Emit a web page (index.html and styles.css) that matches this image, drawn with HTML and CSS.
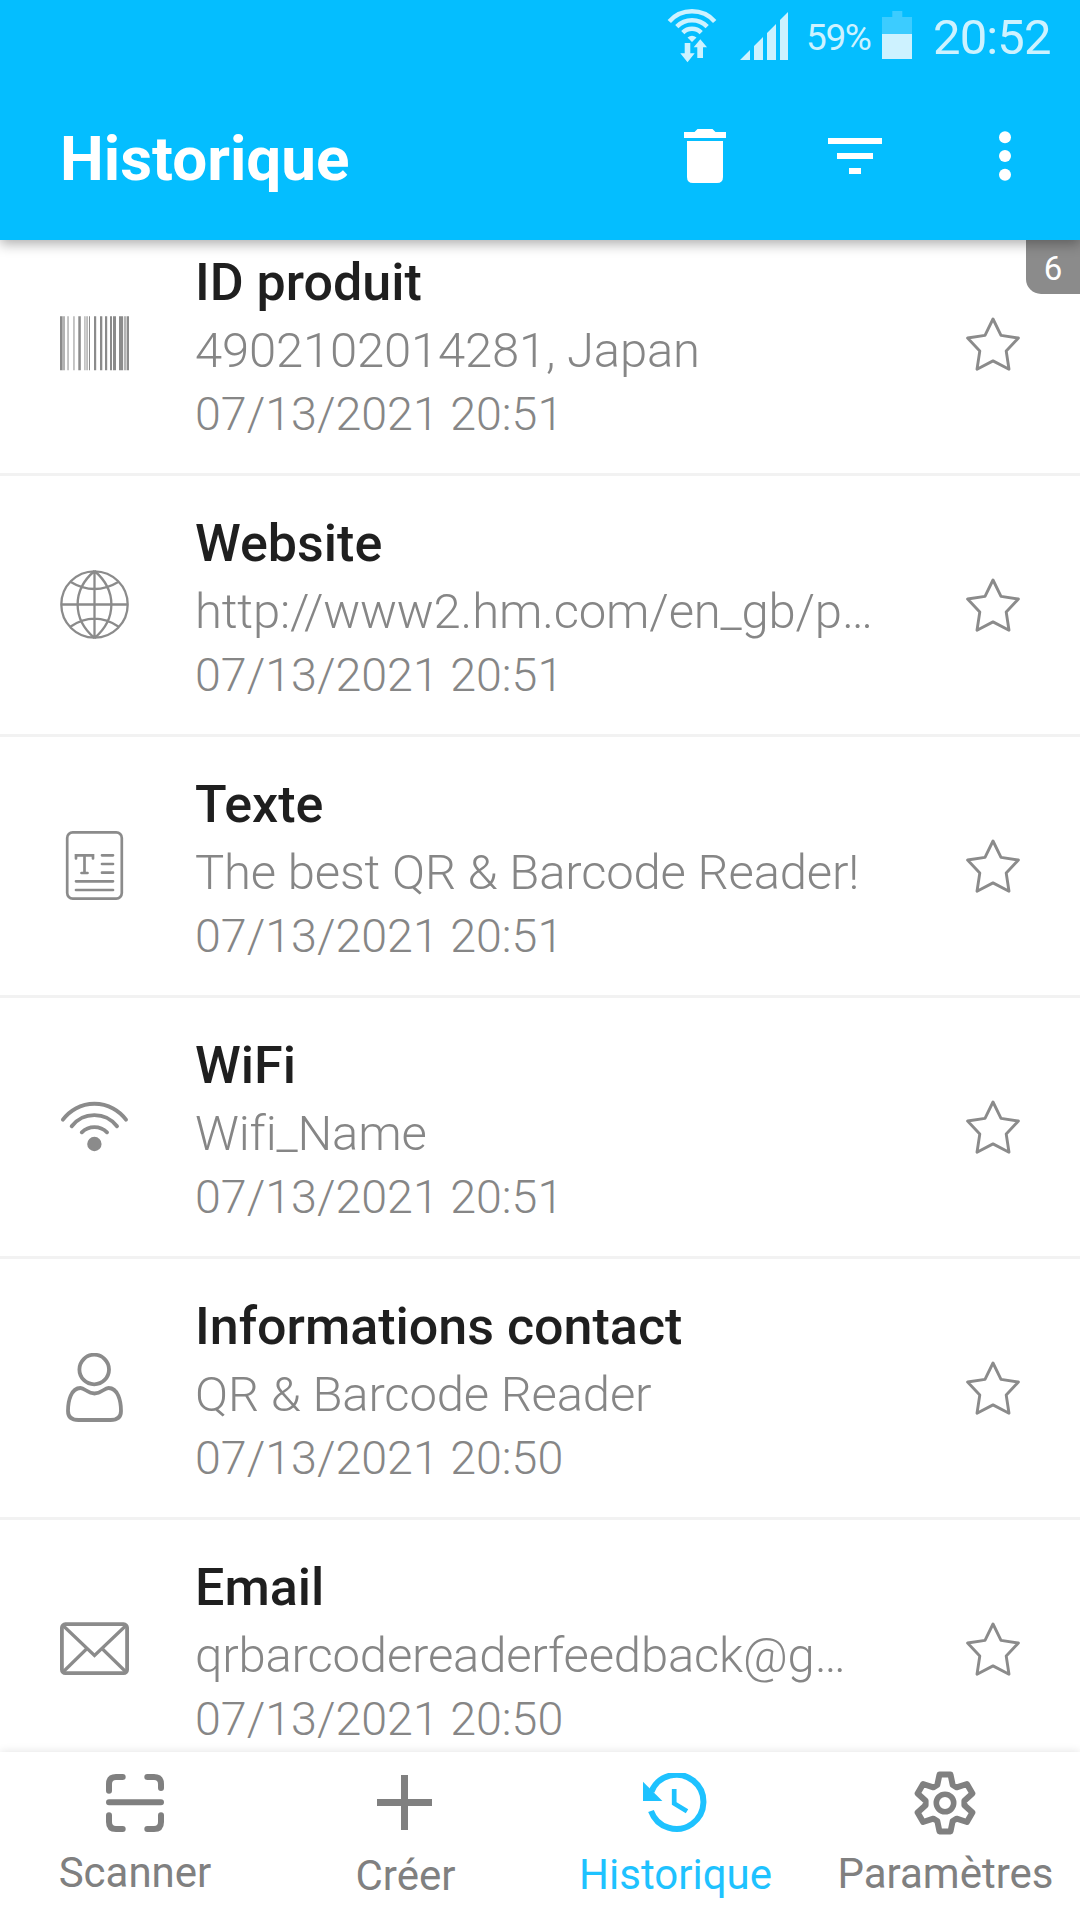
FILE: index.html
```html
<!DOCTYPE html>
<html lang="fr">
<head>
<meta charset="utf-8">
<title>Historique</title>
<link rel="stylesheet" href="styles.css">
</head>
<body>
<svg class="defs" aria-hidden="true">
  <symbol id="star" viewBox="0 0 54 54">
    <path d="M27 2 35 18.4 52.4 21 40.2 34 43 52.2 27 43.9 11 52.2 13.8 34 1.6 21 19 18.4Z" fill="none" stroke="currentColor" stroke-width="2.9" stroke-linejoin="round"/>
  </symbol>
</svg>
<div class="app">
  <header class="header">
    <div class="status">
      <svg class="wifi-status" width="50" height="56" viewBox="0 0 50 56" fill="none" stroke="currentColor" stroke-width="4.5">
        <path d="M2.3 13.4A30.5 30.5 0 0 1 47.7 13.4M9.8 18.6A21.5 21.5 0 0 1 40.2 18.6M15.8 24.6A13 13 0 0 1 34.2 24.6"/>
        <path d="M20.5 29.5Q25 26 29.5 29.5L25 34ZM17.7 35h5.6v10.3h4.4L20.5 54.3 13.3 45.3h4.4ZM33.3 31.3 40 39.3h-4V50h-5.7V39.3h-3.6Z" fill="currentColor" stroke="none"/>
      </svg>
      <svg class="signal" width="48" height="48" viewBox="0 0 48 48" fill="currentColor"><path d="M0 48 10 38V48ZM14 34 23 25V48H14ZM27 21 36 12V48H27ZM40 8 48 0V48H40Z"/></svg>
      <span class="percent">59%</span>
      <svg class="battery" width="30" height="48" viewBox="0 0 30 48"><path d="M10.3 0h10v6H30v17H0V6h10.3Z" fill="#3cccff"/><path d="M0 23h30v25H0Z" fill="currentColor"/></svg>
      <span class="clock">20:52</span>
    </div>
    <div class="toolbar">
      <h1 class="title">Historique</h1>
      <svg class="trash" width="42" height="54" viewBox="0 0 42 54" fill="currentColor"><path d="M0 3H10.5L13.5 0H28.5L31.5 3H42V9H0ZM3 12H39V48Q39 54 33 54H9Q3 54 3 48Z"/></svg>
      <svg class="filter" width="54" height="36" viewBox="0 0 54 36" fill="currentColor"><path d="M0 0H54V6H0ZM9 15H45V21H9ZM21 30H33V36H21Z"/></svg>
      <svg class="more" width="12" height="50" viewBox="0 0 12 50" fill="currentColor"><circle cx="6" cy="6.2" r="6"/><circle cx="6" cy="25" r="6"/><circle cx="6" cy="43.8" r="6"/></svg>
    </div>
  </header>

  <main class="list">
    <span class="count">6</span>
    <article class="row">
      <svg class="icon" viewBox="0 0 69 69" fill="currentColor">
        <path d="M0 7.3h2.4v54H0ZM18.3 7.3h2.5v54h-2.5ZM29 7.3h1v54h-1ZM34 7.3h2.2v54H34ZM40 7.3h2.3v54H40ZM45 7.3h2.2v54H45ZM50 7.3h2v54h-2ZM53 7.3h3v54h-3ZM59 7.3H63v54h-4ZM66.8 7.3H69v54h-2.2Z"/>
        <path d="M2.4 7.3h2.6v54h-2.6ZM7.3 7.3h1.5v54H7.3ZM13.2 7.3h1.5v54h-1.5ZM24.2 7.3h1.4v54h-1.4ZM26.3 7.3h1.6v54h-1.6ZM63.8 7.3h2.6v54h-2.6Z" opacity=".65"/>
      </svg>
      <div class="text"><h2>ID produit</h2><p class="value">4902102014281, Japan</p><p class="date">07/13/2021 20:51</p></div>
      <svg class="star"><use href="#star"/></svg>
    </article>
    <article class="row">
      <svg class="icon" viewBox="0 0 69 69" fill="none" stroke="currentColor" stroke-width="2.3">
        <circle cx="34.5" cy="34.5" r="33.2"/>
        <path d="M34.5 1V68M1 34.5H68M34.5 1C12 20 12 49 34.5 68M34.5 1C57 20 57 49 34.5 68M10.3 11.7Q34.5 26.3 58.7 11.7M10.3 56.7Q34.5 40.7 58.7 56.7"/>
      </svg>
      <div class="text"><h2>Website</h2><p class="value">http://www2.hm.com/en_gb/p…</p><p class="date">07/13/2021 20:51</p></div>
      <svg class="star"><use href="#star"/></svg>
    </article>
    <article class="row">
      <svg class="icon" viewBox="0 0 69 69" fill="none" stroke="currentColor" stroke-width="2.7" stroke-linecap="round">
        <rect x="7.2" y="1.4" width="54.6" height="66.2" rx="5.5"/>
        <path d="M16 27.5V24.3H33V27.5M24.5 24.3V42M21.5 42H27.5M42 24.3H53M42 33H53M42 41.7H53M16 50.3H53M16 59H53"/>
      </svg>
      <div class="text"><h2>Texte</h2><p class="value">The best QR &amp; Barcode Reader!</p><p class="date">07/13/2021 20:51</p></div>
      <svg class="star"><use href="#star"/></svg>
    </article>
    <article class="row">
      <svg class="icon" viewBox="0 0 69 69" fill="none" stroke="currentColor" stroke-width="3.9" stroke-linecap="round">
        <path d="M2.9 27.7A39.2 39.2 0 0 1 66 27.7M11.7 34.3A28.5 28.5 0 0 1 57 34.3M21.8 40.3A18 18 0 0 1 47 40.3"/>
        <circle cx="34.4" cy="52" r="7.2" fill="currentColor" stroke="none"/>
      </svg>
      <div class="text"><h2>WiFi</h2><p class="value">Wifi_Name</p><p class="date">07/13/2021 20:51</p></div>
      <svg class="star"><use href="#star"/></svg>
    </article>
    <article class="row">
      <svg class="icon" viewBox="0 0 69 69" fill="none" stroke="currentColor" stroke-width="3.8">
        <circle cx="34.2" cy="16.5" r="14.8"/>
        <path d="M34.5 40.5C28 40.5 24.5 35 20.5 35C11 35 8 48 8 58C8 64 12 67 18.5 67H50.5C57 67 61 64 61 58C61 48 58 35 48.5 35C44.5 35 41 40.5 34.5 40.5Z"/>
      </svg>
      <div class="text"><h2>Informations contact</h2><p class="value">QR &amp; Barcode Reader</p><p class="date">07/13/2021 20:50</p></div>
      <svg class="star"><use href="#star"/></svg>
    </article>
    <article class="row">
      <svg class="icon" viewBox="0 0 69 69" fill="none" stroke="currentColor" stroke-width="3.8">
        <rect x="1.9" y="10.2" width="65.2" height="49" rx="3.5"/>
        <path d="M3 11.5 34.5 41.5 66 11.5M26.5 35 3 58M42.5 35 66 58" stroke-width="3.2"/>
      </svg>
      <div class="text"><h2>Email</h2><p class="value">qrbarcodereaderfeedback@g…</p><p class="date">07/13/2021 20:50</p></div>
      <svg class="star"><use href="#star"/></svg>
    </article>
  </main>

  <nav class="nav">
    <a class="tab tab-scan">
      <svg width="58" height="58" viewBox="0 0 58 58" fill="none" stroke="currentColor" stroke-width="6" stroke-linecap="round"><path d="M3 16.7V10Q3 3 10 3H16.7M41.3 3H48Q55 3 55 10V14M3 41.3V48Q3 55 10 55H16.7M41.3 55H48Q55 55 55 48V41.3M3 28.3H55"/></svg>
      <span>Scanner</span>
    </a>
    <a class="tab tab-create">
      <svg width="55" height="55" viewBox="0 0 55 55" fill="none" stroke="currentColor" stroke-width="7"><path d="M27.5 0V55M0 27.5H55"/></svg>
      <span>Créer</span>
    </a>
    <a class="tab tab-history active">
      <svg width="64" height="60" viewBox="0 0 64 60" fill="none" stroke="currentColor" stroke-width="6"><path d="M8.5 18.5A27 27 0 1 1 8 37.9"/><path d="M31.2 16V30.5L44 38.2" stroke-width="4.7"/><path d="M0 8.7V27.9H19.4Z" fill="currentColor" stroke="none"/></svg>
      <span>Historique</span>
    </a>
    <a class="tab tab-settings">
      <svg width="64" height="64" viewBox="-32 -32 64 64" fill="none" stroke="currentColor" stroke-width="6" stroke-linejoin="round"><path d="M-5.5 -28.5H5.5L7.7 -18 11.7 -15.7 21.9 -19 27.4 -9.5 19.4 -2.3V2.3L27.4 9.5 21.9 19 11.7 15.7 7.7 18 5.5 28.5H-5.5L-7.7 18 -11.7 15.7 -21.9 19 -27.4 9.5 -19.4 2.3V-2.3L-27.4 -9.5 -21.9 -19 -11.7 -15.7 -7.7 -18Z"/><circle r="8.7" stroke-width="5.6"/></svg>
      <span>Paramètres</span>
    </a>
  </nav>
</div>
</body>
</html>
```
FILE: styles.css
```css
* { box-sizing: border-box; margin: 0; padding: 0; }
body { font-family: Roboto, "Liberation Sans", sans-serif; background: #fff; }
svg { display: block; flex: none; }
.defs { position: absolute; width: 0; height: 0; }
.app { width: 1080px; height: 1920px; display: flex; flex-direction: column; overflow: hidden; }

.header { position: relative; z-index: 2; height: 240px; flex: none; background: #04beff; color: #fff; box-shadow: 0 4px 12px rgba(0, 0, 0, .32); }
.status { height: 72px; display: flex; align-items: flex-start; justify-content: flex-end; padding-right: 29px; color: #cdf2ff; white-space: nowrap; }
.wifi-status { margin: 8px 23px 0 0; }
.signal { margin: 12px 18px 0 0; }
.percent { width: 67px; margin: 17px 9px 0 0; font-size: 37px; line-height: 42px; letter-spacing: -1.4px; }
.battery { margin: 11px 21px 0 0; }
.clock { width: 118px; margin-top: 9px; font-size: 49px; line-height: 58px; letter-spacing: -.9px; }

.toolbar { height: 168px; display: flex; align-items: center; padding: 0 69px 0 60px; }
.title { flex: 1; font-size: 62px; line-height: 70px; font-weight: 700; padding-top: 6px; }
.trash { margin-right: 102px; }
.filter { margin-right: 117px; }

.list { position: relative; flex: 1; min-height: 0; overflow: hidden; color: #8b8b8b; }
.count { position: absolute; top: 0; right: 0; width: 54px; height: 54px; border-bottom-left-radius: 15px; background: #8b8b8b; color: #fff; font-size: 33px; line-height: 57px; text-align: center; }
.row { height: 261px; display: flex; align-items: center; padding: 0 60px; border-bottom: 3px solid #f2f2f2; }
.count + .row { margin-top: -25px; }
.icon { width: 69px; height: 69px; margin: 0 66px 1px 0; }
.text { flex: 1; align-self: flex-start; min-width: 0; padding-top: 34px; white-space: nowrap; color: #868686; }
.text h2 { margin-bottom: -1px; font-size: 52px; line-height: 68px; font-weight: 500; color: #1f1f1f; }
.value { font-size: 49px; line-height: 69px; font-weight: 300; letter-spacing: -.18px; }
.date { font-size: 46.6px; line-height: 59px; font-weight: 300; }
.star { width: 54px; height: 54px; }

.nav { position: relative; z-index: 1; height: 168px; flex: none; display: grid; grid-template-columns: repeat(4, 270px); background: #fff; color: #808080; box-shadow: 0 0 9px rgba(0, 0, 0, .12); }
.tab { display: flex; flex-direction: column; align-items: center; font-size: 42px; line-height: 50px; }
.tab svg { margin-top: 22px; }
.tab-create svg { margin: 23px 1px 0 0; }
.tab-history svg { margin-top: 21px; }
.tab-settings svg { margin-top: 19px; }
.tab-scan span { margin-top: 16px; }
.tab-create span { margin: 21px 0 0 1px; }
.tab-history span { margin: 17px 0 0 1px; }
.tab-settings span { margin: 14px 0 0 1px; }
.active { color: #1ec2ff; }
```
